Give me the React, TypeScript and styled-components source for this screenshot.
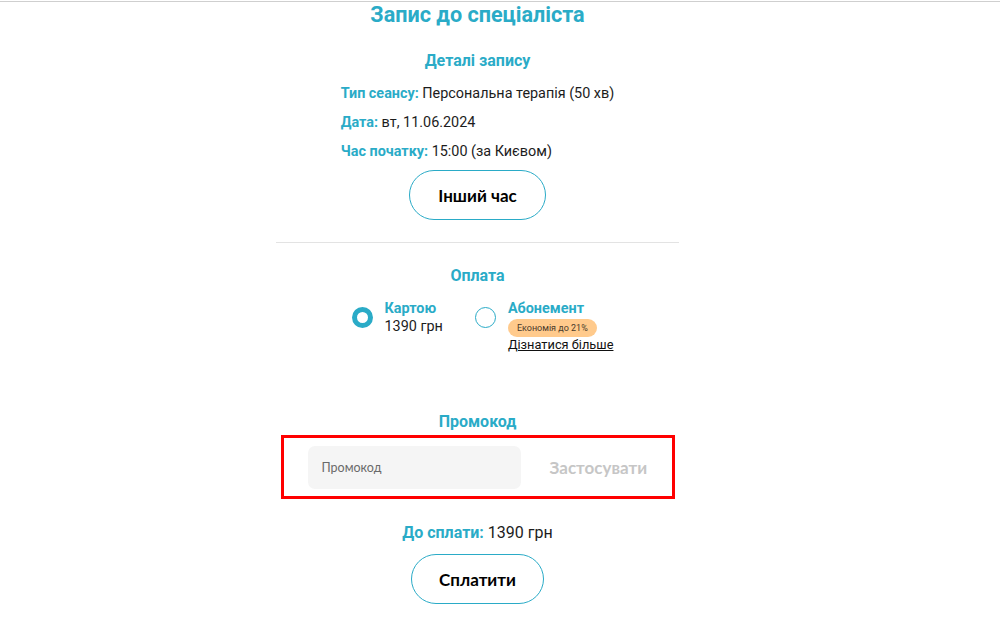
import React from "react";
import styled, { createGlobalStyle } from "styled-components";

const TEAL = "#2aabc7";

const Global = createGlobalStyle`
  html, body { margin: 0; padding: 0; background: #fff; }
  body { font-family: Roboto, "Noto Sans", sans-serif; color: #1c1c1c; }
  * { box-sizing: border-box; }
`;

const TopLine = styled.div`
  height: 1px;
  margin-top: 1px;
  background: #cfcfcf;
`;

const Column = styled.main`
  width: 403px;
  margin-left: 276px;
  display: flex;
  flex-direction: column;
  align-items: center;
`;

const Title = styled.h1`
  margin: 0;
  font-size: 21.6px;
  line-height: 26px;
  font-weight: 700;
  color: ${TEAL};
`;

const Heading = styled.h2<{ $top: number }>`
  margin: ${(p) => p.$top}px 0 0;
  font-size: 16px;
  line-height: 20px;
  font-weight: 700;
  color: ${TEAL};
`;

const Details = styled.div`
  margin-top: 13px;
  display: flex;
  flex-direction: column;
  gap: 9px;
`;

const Row = styled.div`
  font-size: 14.4px;
  line-height: 20px;
`;

const Label = styled.span`
  color: ${TEAL};
  font-weight: 700;
`;

const PillButton = styled.button<{ $w: number; $top: number }>`
  margin-top: ${(p) => p.$top}px;
  width: ${(p) => p.$w}px;
  height: 50px;
  border: 1px solid ${TEAL};
  border-radius: 25px;
  background: #fff;
  font-family: Lato, "Noto Sans", sans-serif;
  font-weight: 700;
  font-size: 17px;
  color: #000;
  cursor: pointer;
`;

const Divider = styled.hr`
  width: 100%;
  margin: 22px 0 0;
  border: 0;
  border-top: 1px solid #e3e3e3;
`;

const Options = styled.div`
  margin-top: 14px;
  display: flex;
  gap: 32px;
  padding-left: 10px;
`;

const Option = styled.label`
  display: flex;
  align-items: flex-start;
  gap: 12px;
`;

const Radio = styled.span<{ $checked?: boolean }>`
  margin-top: 7px;
  width: 21px;
  height: 21px;
  border-radius: 50%;
  flex-shrink: 0;
  border: ${(p) => (p.$checked ? `5px solid ${TEAL}` : `1px solid ${TEAL}`)};
`;

const OptionBody = styled.div`
  display: flex;
  flex-direction: column;
  align-items: flex-start;
`;

const OptionTitle = styled.span`
  font-size: 14.4px;
  line-height: 18px;
  font-weight: 700;
  color: ${TEAL};
`;

const OptionPrice = styled.span`
  font-size: 14.4px;
  line-height: 18px;
`;

const Badge = styled.span`
  margin-top: 1px;
  height: 18px;
  padding: 0 9px;
  border-radius: 9px;
  background: #ffca8c;
  font-size: 9px;
  line-height: 18px;
  color: #4a3a2a;
`;

const MoreLink = styled.a`
  margin-top: 0;
  font-size: 12.8px;
  line-height: 16px;
  color: #111;
  text-decoration: underline;
`;

const PromoBox = styled.div`
  margin-top: 3px;
  width: 394px;
  height: 64px;
  border: 3px solid #ff0000;
  display: flex;
  align-items: center;
  padding-left: 24px;
  gap: 29px;
`;

const PromoInput = styled.input`
  width: 213px;
  height: 43px;
  border: 0;
  border-radius: 7px;
  background: #f5f5f5;
  padding: 0 14px;
  font-family: Lato, "Noto Sans", sans-serif;
  font-size: 12.5px;
  color: #333;
  outline: none;
  &::placeholder { color: #6a6a6a; }
`;

const ApplyButton = styled.button`
  border: 0;
  background: none;
  padding: 0;
  font-family: Lato, "Noto Sans", sans-serif;
  font-weight: 700;
  font-size: 17px;
  color: #c6c6c6;
`;

const Total = styled.div`
  margin-top: 24px;
  font-size: 16px;
  line-height: 20px;
`;

export default function App() {
  return (
    <>
      <Global />
      <TopLine />
      <Column>
        <Title>Запис до спеціаліста</Title>
        <Heading $top={23}>Деталі запису</Heading>
        <Details>
          <Row><Label>Тип сеансу:</Label> Персональна терапія (50 хв)</Row>
          <Row><Label>Дата:</Label> вт, 11.06.2024</Row>
          <Row><Label>Час початку:</Label> 15:00 (за Києвом)</Row>
        </Details>
        <PillButton $w={137} $top={8}>Інший час</PillButton>
        <Divider />
        <Heading $top={23}>Оплата</Heading>
        <Options>
          <Option>
            <Radio $checked />
            <OptionBody>
              <OptionTitle>Картою</OptionTitle>
              <OptionPrice>1390 грн</OptionPrice>
            </OptionBody>
          </Option>
          <Option>
            <Radio />
            <OptionBody>
              <OptionTitle>Абонемент</OptionTitle>
              <Badge>Економія до 21%</Badge>
              <MoreLink href="#">Дізнатися більше</MoreLink>
            </OptionBody>
          </Option>
        </Options>
        <Heading $top={59}>Промокод</Heading>
        <PromoBox>
          <PromoInput placeholder="Промокод" />
          <ApplyButton>Застосувати</ApplyButton>
        </PromoBox>
        <Total><Label>До сплати:</Label> 1390 грн</Total>
        <PillButton $w={133} $top={11}>Сплатити</PillButton>
      </Column>
    </>
  );
}
